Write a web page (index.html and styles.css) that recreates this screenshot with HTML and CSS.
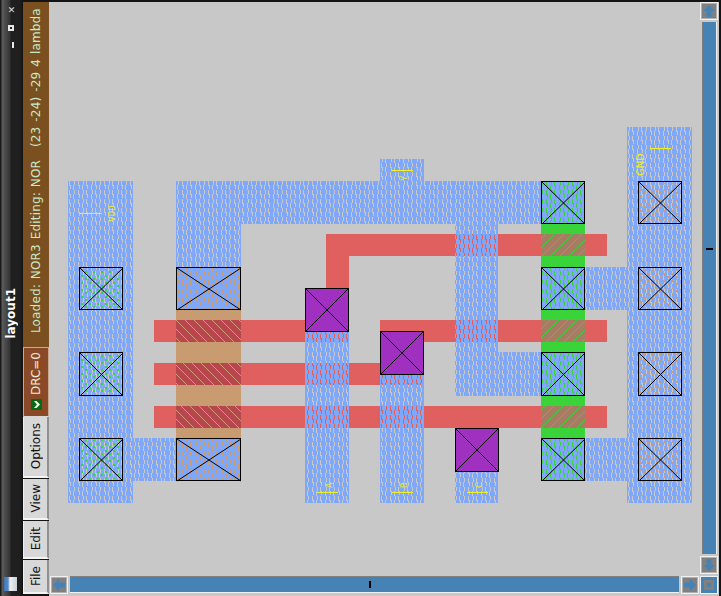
FILE: index.html
```html
<!doctype html>
<html lang="en-US">

<head>
	<title>layout1</title>
	<link rel="stylesheet" href="styles.css">
</head>

<body>
	<div class="window">

		<!-- title bar runs down the left edge -->
		<div class="titlebar">
			<div class="winbtns">
				<span class="winbtn">&#10005;</span>
				<span class="winbtn-max"></span>
				<span class="winbtn-min"></span>
			</div>
			<div class="wintitle">layout1</div>
			<div class="winicon"></div>
		</div>

		<div class="side">
			<div class="status">
				<span>Loaded: NOR3 Editing: NOR</span>
				<span>(23 -24) -29 4 lambda</span>
			</div>
			<div class="drc">
				<span>DRC=0</span>
				<svg class="check" width="11" height="11" viewBox="0 0 11 11">
					<rect width="11" height="11" fill="#0a6a14" />
					<path d="M3 2 L6 5.5 L3 9 H5.5 L9 5.5 L5.5 2 Z" fill="#fff" />
				</svg>
			</div>
			<div class="tab tab-options"><span>Options</span></div>
			<div class="tab tab-view"><span>View</span></div>
			<div class="tab tab-edit"><span>Edit</span></div>
			<div class="tab tab-file"><span>File</span></div>
		</div>

		<div class="main">
			<svg class="canvas" width="650" height="572" viewBox="49 2 650 572" shape-rendering="crispEdges">
				<defs>
					<pattern id="metal" x="68" y="181" width="26" height="9" patternUnits="userSpaceOnUse">
						<path fill-rule="evenodd" fill="#80a8fa" d="M0 0H26V9H0Z
							M1 0h1v5h-1z M2 4h1v4h-1z
							M5 4h1v5h-1z M6 0h1v4h-1z
							M10 0h1v5h-1z M11 4h1v4h-1z
							M14 4h1v5h-1z M15 0h1v4h-1z
							M18 0h1v5h-1z M19 4h1v4h-1z
							M23 4h1v5h-1z M24 0h1v4h-1z" />
					</pattern>
					<pattern id="polytan" x="176" y="320" width="9" height="9" patternUnits="userSpaceOnUse">
						<rect width="9" height="9" fill="#b8464e" />
						<path d="M0 0h1v1h-1z M1 1h1v1h-1z M2 2h1v1h-1z M3 3h1v1h-1z M4 4h1v1h-1z M5 5h1v1h-1z M6 6h1v1h-1z M7 7h1v1h-1z M8 8h1v1h-1z" fill="#d09a70" />
					</pattern>
					<pattern id="polygreen" x="541" y="320" width="9" height="9" patternUnits="userSpaceOnUse">
						<rect width="9" height="9" fill="#a67c62" />
						<path d="M8 0h1v1h-1z M7 1h1v1h-1z M6 2h1v1h-1z M5 3h1v1h-1z M4 4h1v1h-1z M3 5h1v1h-1z M2 6h1v1h-1z M1 7h1v1h-1z M0 8h1v1h-1z" fill="#3ad43a" />
					</pattern>
					<pattern id="dotgreen" x="79" y="267" width="8" height="7" patternUnits="userSpaceOnUse">
						<path d="M2 1h2v2h-2z M6 4h2v2h-2z" fill="#3ad43a" />
					</pattern>
					<pattern id="dotorange" x="638" y="181" width="8" height="7" patternUnits="userSpaceOnUse">
						<path d="M2 1h2v2h-2z M6 4h2v2h-2z" fill="#d09a70" />
					</pattern>
				</defs>

				<!-- diffusion -->
				<rect class="tan" x="176" y="267" width="65" height="214" />
				<rect class="green" x="541" y="181" width="44" height="300" />

				<!-- poly -->
				<g class="poly">
					<rect x="154" y="320" width="195" height="22" />
					<rect x="380" y="320" width="227" height="22" />
					<rect x="154" y="363" width="270" height="22" />
					<rect x="154" y="406" width="453" height="22" />
					<rect x="326" y="234" width="281" height="22" />
					<rect x="326" y="234" width="23" height="54" />
				</g>
				<rect x="176" y="320" width="65" height="22" fill="url(#polytan)" />
				<rect x="176" y="363" width="65" height="22" fill="url(#polytan)" />
				<rect x="176" y="406" width="65" height="22" fill="url(#polytan)" />
				<rect x="541" y="234" width="44" height="22" fill="url(#polygreen)" />
				<rect x="541" y="320" width="44" height="22" fill="url(#polygreen)" />
				<rect x="541" y="406" width="44" height="22" fill="url(#polygreen)" />

				<!-- metal -->
				<path fill="url(#metal)" d="
					M68 181H133V438H176V481H133V503H68Z
					M176 181H380V159H424V181H541V224H498V352H541V396H455V224H241V310H176Z
					M176 438H241V481H176Z
					M305 331H349V503H305Z
					M380 374H424V503H380Z
					M455 471H498V503H455Z
					M541 181H585V224H541Z
					M541 267H627V127H692V503H627V481H541V438H627V310H541Z
					M541 352H585V396H541Z" />

				<!-- contact dots -->
				<rect x="81" y="269" width="40" height="39" fill="url(#dotgreen)" />
				<rect x="81" y="354" width="40" height="40" fill="url(#dotgreen)" />
				<rect x="81" y="440" width="40" height="39" fill="url(#dotgreen)" />
				<rect x="640" y="183" width="40" height="39" fill="url(#dotorange)" />
				<rect x="640" y="269" width="40" height="39" fill="url(#dotorange)" />
				<rect x="640" y="354" width="40" height="40" fill="url(#dotorange)" />
				<rect x="640" y="440" width="40" height="39" fill="url(#dotorange)" />

				<!-- vias -->
				<g class="via">
					<rect x="305.500" y="288.500" width="43" height="43" />
					<rect x="380.500" y="331.500" width="43" height="43" />
					<rect x="455.500" y="428.500" width="43" height="43" />
				</g>
				<path class="cross" d="M305 288L349 332M349 288L305 332 M380 331L424 375M424 331L380 375 M455 428L499 472M499 428L455 472" />

				<!-- contacts -->
				<g class="contact">
					<rect x="79.500" y="267.500" width="43" height="42" />
					<rect x="79.500" y="352.500" width="43" height="43" />
					<rect x="79.500" y="438.500" width="43" height="42" />
					<rect x="176.500" y="267.500" width="64" height="42" />
					<rect x="176.500" y="438.500" width="64" height="42" />
					<rect x="541.500" y="181.500" width="43" height="42" />
					<rect x="541.500" y="267.500" width="43" height="42" />
					<rect x="541.500" y="352.500" width="43" height="43" />
					<rect x="541.500" y="438.500" width="43" height="42" />
					<rect x="638.500" y="181.500" width="43" height="42" />
					<rect x="638.500" y="267.500" width="43" height="42" />
					<rect x="638.500" y="352.500" width="43" height="43" />
					<rect x="638.500" y="438.500" width="43" height="42" />
				</g>
				<path class="cross" d="
					M80 268L123 310M123 268L80 310 M80 353L123 396M123 353L80 396 M80 439L123 481M123 439L80 481
					M177 268L241 310M241 268L177 310 M177 439L241 481M241 439L177 481
					M542 182L585 224M585 182L542 224 M542 268L585 310M585 268L542 310 M542 353L585 396M585 353L542 396 M542 439L585 481M585 439L542 481
					M639 182L682 224M682 182L639 224 M639 268L682 310M682 268L639 310 M639 353L682 396M682 353L639 396 M639 439L682 481M682 439L639 481" />

				<!-- labels -->
				<path class="mark" d="M80 213.500H102 M650 148.500H671 M391 170.500H413 M317 492.500H338 M392 492.500H413 M467 492.500H488" />
				<g class="label" shape-rendering="auto">
					<text transform="translate(115 222) rotate(-90)" textLength="17" lengthAdjust="spacingAndGlyphs">VDD</text>
					<text class="label-big" transform="translate(644 176) rotate(-90)" textLength="23" lengthAdjust="spacingAndGlyphs">GND</text>
					<text transform="translate(407 181) rotate(-90)">Y</text>
					<text transform="translate(332 488) rotate(-90)">A</text>
					<text transform="translate(407 488) rotate(-90)">B</text>
					<text transform="translate(482 488) rotate(-90)">C</text>
				</g>
			</svg>

			<!-- vertical scrollbar -->
			<div class="vscroll">
				<div class="sbtn">
					<svg width="12" height="12" viewBox="0 0 12 12"><path d="M6 0L12 6H8.500V12H3.500V6H0Z" fill="#4682b4" /></svg>
				</div>
				<div class="vtrack"><i class="vtick"></i></div>
				<div class="sbtn">
					<svg width="12" height="12" viewBox="0 0 12 12"><path d="M6 12L12 6H8.500V0H3.500V6H0Z" fill="#4682b4" /></svg>
				</div>
			</div>

			<!-- horizontal scrollbar -->
			<div class="hscroll">
				<div class="sbtn">
					<svg width="12" height="12" viewBox="0 0 12 12"><path d="M0 6L6 0V3.500H12V8.500H6V12Z" fill="#4682b4" /></svg>
				</div>
				<div class="htrack"><i class="htick"></i></div>
				<div class="sbtn">
					<svg width="12" height="12" viewBox="0 0 12 12"><path d="M12 6L6 0V3.500H0V8.500H6V12Z" fill="#4682b4" /></svg>
				</div>
			</div>

			<div class="corner"><i></i></div>
		</div>
	</div>
</body>
</html>
```

FILE: styles.css
```css
html, body {
	margin: 0;
	height: 100%;
	background: #141414;
	overflow: hidden;
}

.window {
	display: flex;
	width: 721px;
	height: 596px;
	font-family: "DejaVu Sans", sans-serif;
}

/* title bar */
.titlebar {
	display: flex;
	flex-direction: column;
	align-items: center;
	width: 23px;
	height: 596px;
	box-sizing: border-box;
	background: linear-gradient(to right, #1a1a1a 0, #1a1a1a 1px, #5c5c5c 2px, #333 10px, #1f1f1f 11px, #1f1f1f 20px, #111 23px);
	position: relative;
}

.winbtns {
	display: flex;
	flex-direction: column;
	align-items: center;
	padding-top: 6px;
}

.winbtn {
	color: #e0e0e0;
	font-size: 9px;
	line-height: 9px;
	font-weight: bold;
}

.winbtn-max {
	width: 2px;
	height: 2px;
	margin-top: 10px;
	border: 2px solid #e8e8e8;
}

.winbtn-min {
	width: 2px;
	height: 6px;
	margin-top: 11px;
	margin-left: 4px;
	background: #e8e8e8;
}

.wintitle {
	writing-mode: vertical-rl;
	transform: rotate(180deg);
	position: absolute;
	left: 3px;
	top: 288px;
	color: #fff;
	font-weight: bold;
	font-size: 12px;
	line-height: 16px;
}

.winicon {
	position: absolute;
	left: 4px;
	top: 577px;
	width: 13px;
	height: 14px;
	background: linear-gradient(to right, #3f76b8 0, #5a8ac4 4px, #f0f0f0 6px, #c8d0d8 13px);
}

/* side column */
.side {
	display: flex;
	flex-direction: column;
	width: 26px;
	padding-top: 2px;
	height: 594px;
	background: #141414;
	color: #111;
	font-size: 12px;
}

.status {
	display: flex;
	justify-content: space-between;
	writing-mode: vertical-rl;
	transform: rotate(180deg);
	height: 345px;
	box-sizing: border-box;
	padding: 14px 0 6px;
	background: #7a5020;
	color: #c8e8c8;
	line-height: 26px;
	letter-spacing: 0.15px;
	word-spacing: 1px;
}

.drc {
	display: flex;
	flex-direction: column;
	align-items: center;
	justify-content: flex-start;
	gap: 4px;
	height: 70px;
	box-sizing: border-box;
	padding-top: 4px;
	background: #8a4a28;
	color: #f0e8d8;
	border: 1px solid #c8a890;
	border-bottom-color: #d8d8d8;
}

.drc span, .tab span {
	writing-mode: vertical-rl;
	transform: rotate(180deg);
	line-height: 24px;
}

.check {
	flex: none;
}

.tab {
	display: flex;
	justify-content: center;
	align-items: center;
	box-sizing: border-box;
	background: #d8d8d8;
	border-right: 2px solid #909090;
	border-bottom: 2px solid #f4f4f4;
	border-left: 1px solid #f0f0f0;
	margin-bottom: 1px;
}

.tab-options { height: 61px; }
.tab-view { height: 41px; }
.tab-edit { height: 38px; }
.tab-file { height: 34px; margin-bottom: 0; }

/* canvas and scrollbars */
.main {
	display: grid;
	grid-template-columns: 650px 20px;
	grid-template-rows: 572px 20px;
	padding-top: 2px;
	background: #c8c8c8;
	box-shadow: inset 0 2px 0 #141414;
}

.canvas {
	display: block;
	background: #c8c8c8;
}

.tan { fill: #c89c70; }
.green { fill: #3ad43a; }
.poly rect { fill: #e06060; }
.via rect { fill: #a030c0; stroke: #000; }
.contact rect { fill: none; stroke: #000; stroke-width: 1.500; }
.cross { stroke: #000; fill: none; shape-rendering: auto; }
.mark { stroke: #f0f020; fill: none; }

.label text {
	fill: #e8e830;
	font-family: "DejaVu Sans Mono", monospace;
	font-size: 9px;
}

.label .label-big {
	font-size: 10px;
}

.vscroll {
	display: flex;
	flex-direction: column;
	gap: 2px;
	padding: 0 0 0 1px;
}

.hscroll {
	display: flex;
	gap: 2px;
	padding: 2px 0 0 1px;
}

.sbtn {
	display: flex;
	justify-content: center;
	align-items: center;
	box-sizing: border-box;
	flex: none;
	width: 18px;
	height: 18px;
	background: #808080;
	border: 1px solid #f0f0f0;
	outline: 1px solid #b0b0b0;
	outline-offset: -2px;
}

.vtrack, .htrack {
	flex: 1;
	position: relative;
	background: #4682b4;
	box-sizing: border-box;
}

.vtrack {
	margin: 0 2px;
	border-left: 1px solid #808080;
	border-right: 1px solid #f0f0f0;
}

.htrack {
	height: 17px;
	border-top: 1px solid #808080;
	border-bottom: 1px solid #f0f0f0;
}

.vtick {
	position: absolute;
	left: 3px;
	top: 226px;
	width: 7px;
	height: 2px;
	background: #000;
}

.htick {
	position: absolute;
	left: 299px;
	top: 4px;
	width: 2px;
	height: 7px;
	background: #000;
}

.corner {
	display: flex;
	justify-content: center;
	align-items: center;
	width: 18px;
	height: 18px;
	margin: 2px 0 0 1px;
	background: #4682b4;
	border: 1px solid #f0f0f0;
	box-sizing: border-box;
}

.corner i {
	display: block;
	width: 4px;
	height: 4px;
	border: 3px solid #808080;
}
```
